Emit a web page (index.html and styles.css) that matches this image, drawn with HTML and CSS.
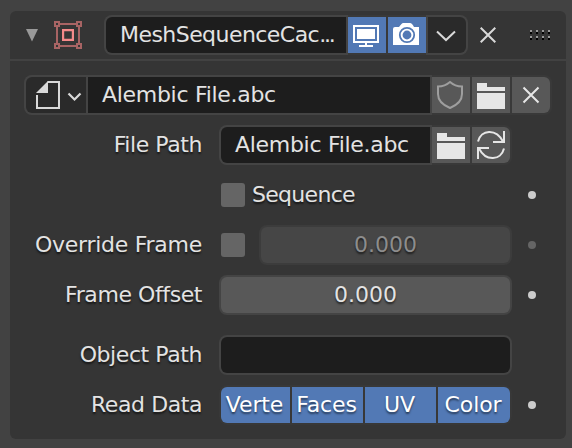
FILE: index.html
```html
<!DOCTYPE html>
<html lang="en">
<head>
<meta charset="utf-8">
<title>Mesh Sequence Cache</title>
<link rel="stylesheet" href="styles.css">
</head>
<body>
<main class="panel">
  <header class="head">
    <svg class="tri" width="12" height="13" viewBox="0 0 12 13"><path d="M0 0H12L6 12.5Z" fill="#999"/></svg>
    <svg class="modicon" width="28" height="28" viewBox="0 0 28 28" fill="none" stroke-width="2"><path stroke="#a86464" d="M1 1H5V5H1ZM23 1H27V5H23ZM1 23H5V27H1ZM23 23H27V27H23ZM6 3H22M6 25H22M3 6V22M25 6V22"/><path stroke="#f58a8a" stroke-width="2.2" d="M9.1 9.1H18.9V18.9H9.1Z"/></svg>
    <div class="group name-group">
      <div class="text name">MeshSequenceCac<span class="dots">...</span></div>
      <button class="btn on"><svg width="38" height="36" viewBox="0 0 38 36"><path d="M6 9H30V25H6Z" fill="none" stroke="#fff" stroke-width="2"/><path d="M9 12H27V22H9ZM17 26H19V28H17ZM11 28H25V30H11Z" fill="#fff"/></svg></button>
      <button class="btn on"><svg width="38" height="36" viewBox="0 0 38 36"><path d="M5 12Q5 10 7 10H11Q14 6 15 6H22Q24 6 26 10H31V28H5Z" fill="#fff"/><circle cx="19" cy="18" r="7.2" fill="none" stroke="#5279b5" stroke-width="1.8"/><circle cx="19" cy="18" r="4.4" fill="#5279b5"/></svg></button>
      <button class="btn menu"><svg width="38" height="36" viewBox="0 0 38 36"><path d="M9 14.5L18 23L27 14.5" fill="none" stroke="#d9d9d9" stroke-width="2"/></svg></button>
    </div>
    <svg class="close" width="16" height="16" viewBox="0 0 16 16"><path d="M.7.7L15.3 15.3M15.3.7L.7 15.3" stroke="#d9d9d9" stroke-width="2"/></svg>
    <svg class="grip" width="20" height="10" viewBox="0 0 20 10"><path d="M0 1H20M0 7H20" stroke="#999" stroke-width="2" stroke-dasharray="2 4"/><path d="M0 3H20M0 9H20" stroke="#000" stroke-width="2" stroke-dasharray="2 4"/></svg>
  </header>
  <section class="body">
    <div class="group file-group">
      <button class="btn filetype"><svg width="60" height="36" viewBox="0 0 60 36"><path d="M10 16L22 4V16Z" fill="#d9d9d9"/><path d="M21.5 5H33V31H11V18" fill="none" stroke="#d9d9d9" stroke-width="2"/><path d="M42.500 16.500L48.500 22.500L54.500 16.500" fill="none" stroke="#d9d9d9" stroke-width="2.200"/></svg></button>
      <div class="text file">Alembic File.abc</div>
      <button class="btn"><svg width="38" height="36" viewBox="0 0 38 36"><path d="M18 5Q23 9.400 30 9.500V17Q30 26 18 31Q6 26 6 17V9.500Q13 9.400 18 5Z" fill="none" stroke="#9e9e9e" stroke-width="2"/></svg></button>
      <button class="btn"><svg width="38" height="36" viewBox="0 0 38 36"><path d="M5 6H15V10H33V14H5ZM5 16H33V32H5Z" fill="#e6e6e6"/></svg></button>
      <button class="btn"><svg width="38" height="36" viewBox="0 0 38 36"><path d="M11.500 10.500L26.500 25.500M26.500 10.500L11.500 25.500" stroke="#e6e6e6" stroke-width="2"/></svg></button>
    </div>
    <div class="row">
      <label class="label">File Path</label>
      <div class="group wide path-group">
        <div class="text path">Alembic File.abc</div>
        <button class="btn"><svg width="38" height="36" viewBox="0 0 38 36"><path d="M5 6H15V10H33V14H5ZM5 16H33V32H5Z" fill="#e6e6e6"/></svg></button>
        <button class="btn"><svg width="38" height="36" viewBox="0 0 38 36" fill="none" stroke="#e6e6e6" stroke-width="2"><path d="M6 14.500C9 2.500 24 1 31 14.500M32 4V15H21M32 21.500C29 33.500 14 35 7 21.500M6 32V21H17"/></svg></button>
      </div>
    </div>
    <div class="row">
      <span class="label"></span>
      <div class="wide line"><i class="check"></i><span class="caption">Sequence</span></div>
      <i class="dot"></i>
    </div>
    <div class="row">
      <label class="label override">Override Frame</label>
      <div class="wide line"><i class="check"></i><div class="group num disabled"><span class="value">0.000</span></div></div>
      <i class="dot dim"></i>
    </div>
    <div class="row">
      <label class="label">Frame Offset</label>
      <div class="group wide num"><span class="value">0.000</span></div>
      <i class="dot"></i>
    </div>
    <div class="row object">
      <label class="label">Object Path</label>
      <div class="group wide"><div class="text empty"></div></div>
    </div>
    <div class="row">
      <label class="label">Read Data</label>
      <div class="group wide flags"><button class="btn on">Verte</button><button class="btn on">Faces</button><button class="btn on">UV</button><button class="btn on">Color</button></div>
      <i class="dot"></i>
    </div>
  </section>
</main>
</body>
</html>
```
FILE: styles.css
```css
* { box-sizing: border-box; }
body {
  margin: 0;
  padding: 11px 6px 9px 10px;
  width: 572px;
  height: 448px;
  overflow: hidden;
  background: #424242;
  color: #e3e3e3;
  font: 22px/36px "DejaVu Sans", sans-serif;
}
svg { display: block; flex: none; }
.panel {
  height: 428px;
  background: #353535;
  border-radius: 6px;
}
.head {
  display: flex;
  align-items: center;
  height: 50px;
  padding-left: 16px;
  border-bottom: 2px solid #424242;
}
.modicon { margin-left: 16px; }
.group {
  display: flex;
  gap: 2px;
  height: 40px;
  padding: 2px;
  background: #444;
  border-radius: 8px;
}
.group > :first-child { border-top-left-radius: 6px; border-bottom-left-radius: 6px; }
.group > :last-child { border-top-right-radius: 6px; border-bottom-right-radius: 6px; }
.name-group {
  width: 364px;
  margin-left: 22px;
  background: linear-gradient(90deg, #444 244px, #393939 244px, #393939 322px, #444 322px);
}
.close { margin-left: 12px; }
.grip { margin-left: 34px; }
.text {
  flex: 1;
  min-width: 0;
  padding-left: 14px;
  background: #1d1d1d;
  letter-spacing: -.3px;
  white-space: nowrap;
}
.name { letter-spacing: -.55px; }
.dots { letter-spacing: -2.2px; }
.btn {
  flex: none;
  display: block;
  width: 38px;
  height: 36px;
  padding: 0;
  border: 0;
  border-radius: 0;
  background: #585858;
  color: #fff;
  font: inherit;
  text-align: center;
}
.on { background: #5279b5; }
.menu { background: #2a2a2a; }
.filetype { width: 60px; background: #2a2a2a; }
.body { padding-top: 14px; }
.file-group {
  width: 528px;
  margin: 0 0 10px 14px;
  background: linear-gradient(90deg, #444 408px, #393939 408px);
}
.path-group { background: linear-gradient(90deg, #444 213px, #393939 213px); }
.row {
  display: flex;
  align-items: center;
  height: 40px;
  margin-bottom: 10px;
}
.object { margin-top: 20px; }
.label {
  width: 192px;
  margin-right: 17px;
  letter-spacing: -.42px;
  text-align: right;
  white-space: nowrap;
}
.override { letter-spacing: -.27px; }
.label, .caption, .num { text-shadow: 0 2px 2px rgba(0, 0, 0, .6); }
.wide { width: 293px; flex: none; }
.line { display: flex; align-items: center; padding-left: 2px; }
.check {
  width: 24px;
  height: 24px;
  border-radius: 3px;
  background: #656565;
}
.caption { margin-left: 7px; letter-spacing: -.7px; }
.value { flex: 1; background: #585858; text-align: center; }
.disabled {
  flex: 1;
  margin-left: 14px;
  background: #3c3c3c;
  color: #8d8d8d;
}
.disabled .value { background: #464646; }
.dot {
  width: 8px;
  height: 8px;
  margin-left: 16px;
  border-radius: 50%;
  background: #ccc;
}
.dim { background: #656565; }
.flags { display: grid; grid-template-columns: 69px 71px 71px 72px; background: #383838; }
.flags .btn { width: auto; padding-right: 2px; letter-spacing: -.1px; text-shadow: 0 2px 2px rgba(0, 0, 0, .5); }
```
